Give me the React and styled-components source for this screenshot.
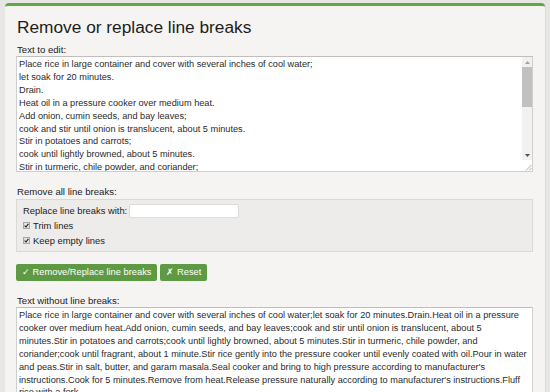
import React from 'react';
import styled, {createGlobalStyle} from 'styled-components';

const GlobalStyle = createGlobalStyle`
  html, body {
    margin: 0;
    padding: 0;
    background: #e6e6e5;
    font-family: "Liberation Sans", Arial, sans-serif;
    color: #222;
    overflow: hidden;
  }
`;

const Page = styled.div`
  width: 550px;
  height: 392px;
  padding-top: 3px;
  box-sizing: border-box;
  overflow: hidden;
`;

const Panel = styled.div`
  margin-left: 5px;
  width: 540px;
  min-height: 420px;
  box-sizing: border-box;
  background: #f5f4f2;
  border-top: 3px solid #5fa944;
  border-radius: 4px 4px 0 0;
  padding: 11px 12px 0 11px;
  box-shadow: 1px 0 0 #dadada;
`;

const Title = styled.h1`
  margin: 0 0 6px 1px;
  font-size: 17.3px;
  line-height: 20px;
  font-weight: normal;
  color: #1d1d1d;
`;

const Label = styled.div`
  font-size: 9.6px;
  line-height: 13px;
  color: #222;
  margin-top: ${(props) => props.$top || 0}px;
  margin-bottom: ${(props) => props.$bottom || 0}px;
  padding-left: 1px;
`;

const Frame = styled.div`
  display: flex;
  width: 517px;
  height: ${(props) => props.$height}px;
  box-sizing: border-box;
  border: 1px solid #cfcfcf;
  border-top-color: #c2bcbc;
  background: #fff;
`;

const TextBox = styled.textarea`
  flex: 1;
  min-width: 0;
  height: 100%;
  box-sizing: border-box;
  margin: 0;
  padding: 1px 2px;
  border: none;
  background: #fff;
  font-family: "Liberation Sans", Arial, sans-serif;
  font-size: 9.2px;
  line-height: 12.9px;
  color: #2a2a2a;
  resize: none;
  overflow: hidden;
  outline: none;
`;

const ScrollColumn = styled.div`
  width: 10px;
  display: flex;
  flex-direction: column;
`;

const ScrollTrack = styled.div`
  flex: 1;
  display: flex;
  flex-direction: column;
  background: #f1f1f1;
`;

const Arrow = styled.div`
  height: 10px;
  display: flex;
  align-items: center;
  justify-content: center;
`;

const Thumb = styled.div`
  height: 40px;
  background: #c1c1c1;
`;

const Spacer = styled.div`
  flex: 1;
`;

const Grip = styled.div`
  height: 11px;
  background: #fff;
  display: flex;
  align-items: flex-end;
  justify-content: flex-end;
`;

const OptionBox = styled.div`
  width: 517px;
  height: 53px;
  box-sizing: border-box;
  border: 1px solid #d9d9d8;
  background: #edecea;
  padding: 3px 6px 0;
  display: flex;
  flex-direction: column;
`;

const Row = styled.div`
  display: flex;
  align-items: center;
  height: ${(props) => props.$height}px;
  font-size: 9.4px;
  color: #222;
`;

const SmallInput = styled.input`
  width: 110px;
  height: 14px;
  box-sizing: border-box;
  margin-left: 2px;
  border: 1px solid #dcdcdc;
  border-radius: 2px;
  background: #fff;
  padding: 0 2px;
  outline: none;
`;

const Check = styled.span`
  width: 7px;
  height: 7px;
  box-sizing: border-box;
  border: 1px solid #a7a7a7;
  background: #e2e2e2;
  margin: 0 3px 0 0;
  display: inline-flex;
  align-items: center;
  justify-content: center;
`;

const Buttons = styled.div`
  display: flex;
  gap: 3px;
  margin: 12px 0 0;
`;

const Button = styled.button`
  height: 17px;
  padding: 0 6px;
  border: none;
  border-radius: 2px;
  background: #5d9a43;
  color: #fff;
  font-family: "Liberation Sans", Arial, sans-serif;
  font-size: 9.3px;
  line-height: 17px;
  cursor: pointer;
`;

const inputText = [
  'Place rice in large container and cover with several inches of cool water;',
  'let soak for 20 minutes.',
  'Drain.',
  'Heat oil in a pressure cooker over medium heat.',
  'Add onion, cumin seeds, and bay leaves;',
  'cook and stir until onion is translucent, about 5 minutes.',
  'Stir in potatoes and carrots;',
  'cook until lightly browned, about 5 minutes.',
  'Stir in turmeric, chile powder, and coriander;',
  'cook until fragrant, about 1 minute.',
  'Stir rice gently into the pressure cooker until evenly coated with oil.',
  'Pour in water and peas.',
  'Stir in salt, butter, and garam masala.',
  "Seal cooker and bring to high pressure according to manufacturer's instructions.",
  'Cook for 5 minutes.',
  'Remove from heat.',
  "Release pressure naturally according to manufacturer's instructions.",
  'Fluff rice with a fork.',
];

function CheckMark() {
  return (
    <svg width="5" height="5" viewBox="0 0 5 5">
      <path d="M0.6 2.6 L2 4 L4.4 0.8" fill="none" stroke="#222" strokeWidth="1.1" />
    </svg>
  );
}

function Triangle({down}) {
  return (
    <svg width="5" height="3" viewBox="0 0 5 3">
      <path d={down ? 'M0 0 H5 L2.5 3 Z' : 'M0 3 H5 L2.5 0 Z'} fill={down ? '#505050' : '#a3a3a3'} />
    </svg>
  );
}

function ResizeGrip() {
  return (
    <svg width="7" height="7" viewBox="0 0 7 7">
      <path d="M6.5 1 L1 6.5 M6.5 4 L4 6.5" stroke="#9a9a9a" strokeWidth="0.8" />
    </svg>
  );
}

export default function App() {
  return (
    <Page>
      <GlobalStyle />
      <Panel>
        <Title>Remove or replace line breaks</Title>
        <Label>Text to edit:</Label>
        <Frame $height={116}>
          <TextBox readOnly defaultValue={inputText.join('\n')} />
          <ScrollColumn>
            <ScrollTrack>
              <Arrow><Triangle /></Arrow>
              <Thumb />
              <Spacer />
              <Arrow><Triangle down /></Arrow>
            </ScrollTrack>
            <Grip><ResizeGrip /></Grip>
          </ScrollColumn>
        </Frame>

        <Label $top={13} $bottom={1}>Remove all line breaks:</Label>
        <OptionBox>
          <Row $height={15}>
            Replace line breaks with:
            <SmallInput type="text" />
          </Row>
          <Row $height={15}>
            <Check><CheckMark /></Check>
            Trim lines
          </Row>
          <Row $height={15}>
            <Check><CheckMark /></Check>
            Keep empty lines
          </Row>
        </OptionBox>

        <Buttons>
          <Button>✓ Remove/Replace line breaks</Button>
          <Button>✗ Reset</Button>
        </Buttons>

        <Label $top={13}>Text without line breaks:</Label>
        <Frame $height={110}>
          <TextBox readOnly defaultValue={inputText.join('')} />
        </Frame>
      </Panel>
    </Page>
  );
}
